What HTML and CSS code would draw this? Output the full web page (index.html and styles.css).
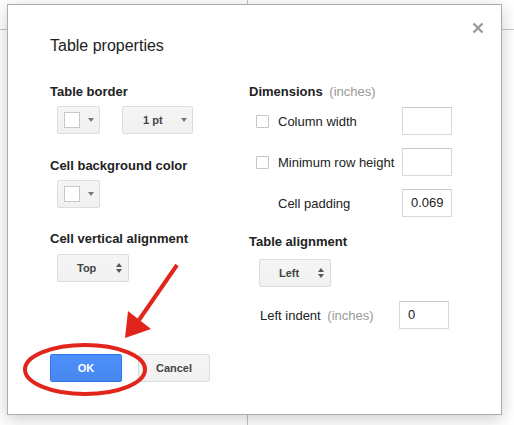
FILE: index.html
```html
<html>
<head>
    <meta charset="utf-8">
    <link rel="stylesheet" href="styles.css">
</head>
<body>

    <div class="dlg">
        <div class="dlgClose">
            <svg width="12" height="12" viewBox="0 0 12 12">
                <path d="M1.5 1.5 L10.5 10.5 M10.5 1.5 L1.5 10.5" stroke="#9a9a9a" stroke-width="2.4" fill="none"/>
            </svg>
        </div>

        <div class="dlgTitle">Table properties</div>

        <div class="dlgCols">
            <div class="colLeft">
                <div class="lbl">Table border</div>
                <div class="btnRow">
                    <div class="gbtn clrBtn"><span class="swatch"></span><span class="tri"></span></div>
                    <div class="gbtn ptBtn"><span class="ptTxt">1 pt</span><span class="tri"></span></div>
                </div>

                <div class="lbl lblGap">Cell background color</div>
                <div class="btnRow">
                    <div class="gbtn clrBtn"><span class="swatch"></span><span class="tri"></span></div>
                </div>

                <div class="lbl lblGap2">Cell vertical alignment</div>
                <div class="btnRow row3">
                    <div class="gbtn selBtn"><span class="selTxt">Top</span><span class="updn"><i class="up"></i><i class="dn"></i></span></div>
                </div>
            </div>

            <div class="colRight">
                <div class="lbl">Dimensions <span class="hint">(inches)</span></div>

                <div class="dimRow first">
                    <span class="chk"></span>
                    <span class="dimLbl">Column width</span>
                    <div class="inp"></div>
                </div>
                <div class="dimRow">
                    <span class="chk"></span>
                    <span class="dimLbl">Minimum row height</span>
                    <div class="inp"></div>
                </div>
                <div class="dimRow">
                    <span class="chkNone"></span>
                    <span class="dimLbl">Cell padding</span>
                    <div class="inp">0.069</div>
                </div>

                <div class="lbl lblAlign">Table alignment</div>
                <div class="btnRow rowAlign">
                    <div class="gbtn selBtn"><span class="selTxt">Left</span><span class="updn"><i class="up"></i><i class="dn"></i></span></div>
                </div>

                <div class="indentRow">
                    <span class="indLbl">Left indent <span class="hint">(inches)</span></span>
                    <div class="inp">0</div>
                </div>
            </div>
        </div>

        <div class="dlgBtns">
            <div class="okBtn">OK</div>
            <div class="gbtn cnlBtn">Cancel</div>
        </div>
    </div>

    <!-- red pointer drawn over the dialog -->
    <svg class="mark" width="514" height="425" viewBox="0 0 514 425">
        <ellipse cx="85" cy="369.5" rx="60" ry="24.5" stroke="#e1251b" stroke-width="4" fill="none"/>
        <line x1="177" y1="265" x2="139" y2="320" stroke="#e1251b" stroke-width="4"/>
        <polygon points="125,338 128,311 151,329" fill="#e1251b"/>
    </svg>

</body>
</html>
```

FILE: styles.css
```css
body {
    margin: 0;
    width: 514px;
    height: 425px;
    overflow: hidden;
    font-family: "Liberation Sans", Arial, sans-serif;
    color: #222;
    background:
        linear-gradient(#c4c4c4, #c4c4c4) 0 29px / 100% 1px no-repeat,
        linear-gradient(#c4c4c4, #c4c4c4) 247px 0 / 1px 100% no-repeat,
        #fff;
}

.dlg {
    position: relative;
    box-sizing: border-box;
    width: 495px;
    height: 411px;
    margin: 4px 0 0 7px;
    padding: 31px 0 0 42px;
    background: #fff;
    border: 1px solid #acacac;
    box-shadow: 0 4px 16px rgba(0, 0, 0, 0.2);
}

.dlgClose {
    position: absolute;
    top: 17px;
    right: 17px;
    width: 12px;
    height: 12px;
}
.dlgClose svg { display: block; }

.dlgTitle {
    font-size: 16px;
    line-height: 20px;
}

.dlgCols {
    display: flex;
    align-items: flex-start;
    margin-top: 28px;
}
.colLeft { width: 199px; }
.colRight { width: 210px; }

.lbl {
    font-size: 13px;
    line-height: 16px;
    font-weight: bold;
}
.lblGap { margin-top: 24px; }
.lblGap2 { margin-top: 23px; }
.lblAlign { margin-top: 17px; }
.hint {
    font-weight: normal;
    color: #999;
    margin-left: 3px;
}

/* grey google style buttons */
.btnRow {
    display: flex;
    gap: 22px;
    margin-top: 6px;
    padding-left: 7px;
}
.row3 { margin-top: 7px; }
.rowAlign { margin-top: 9px; padding-left: 10px; }

.gbtn {
    box-sizing: border-box;
    height: 28px;
    display: flex;
    align-items: center;
    border: 1px solid #dcdcdc;
    border-radius: 2px;
    background: linear-gradient(#f5f5f5, #f1f1f1);
    color: #444;
    font-size: 11px;
    font-weight: bold;
}
.clrBtn {
    width: 43px;
    padding-left: 6px;
}
.swatch {
    box-sizing: border-box;
    width: 16px;
    height: 16px;
    border: 1px solid #c8c8c8;
    background: #fff;
}
.tri {
    width: 0;
    height: 0;
    border-left: 3.5px solid transparent;
    border-right: 3.5px solid transparent;
    border-top: 4px solid #777;
    margin-left: 8px;
}
.ptBtn {
    width: 71px;
    padding-left: 20px;
}
.ptBtn .tri { margin-left: 18px; }

.selBtn {
    width: 72px;
    padding-left: 19px;
}
.selTxt { width: 39px; }
.rowAlign .selTxt { width: 39px; }
.updn {
    display: flex;
    flex-direction: column;
    gap: 2px;
}
.updn i {
    width: 0;
    height: 0;
    border-left: 3.5px solid transparent;
    border-right: 3.5px solid transparent;
}
.updn .up { border-bottom: 4px solid #555; }
.updn .dn { border-top: 4px solid #555; }

/* dimensions rows */
.dimRow {
    display: flex;
    align-items: center;
    margin-top: 13px;
    padding-left: 7px;
    font-size: 13px;
}
.dimRow.first { margin-top: 7px; }
.chk, .chkNone {
    box-sizing: border-box;
    width: 13px;
    height: 13px;
    margin-right: 9px;
    flex: none;
}
.chk {
    border: 1px solid #c6c6c6;
    border-radius: 1px;
}
.dimLbl { width: 124px; }

.inp {
    box-sizing: border-box;
    width: 50px;
    height: 28px;
    padding-left: 8px;
    border: 1px solid #d9d9d9;
    border-top-color: #c8c8c8;
    font-size: 13px;
    line-height: 26px;
}

.indentRow {
    display: flex;
    align-items: center;
    margin-top: 14px;
    padding-left: 11px;
    font-size: 13px;
}
.indLbl { width: 139px; }

.dlgBtns {
    display: flex;
    gap: 16px;
    margin-top: 25px;
}
.okBtn, .cnlBtn {
    box-sizing: border-box;
    width: 72px;
    height: 28px;
    justify-content: center;
    font-size: 11px;
    font-weight: bold;
    border-radius: 2px;
}
.okBtn {
    display: flex;
    align-items: center;
    color: #fff;
    border: 1px solid #3079ed;
    background: linear-gradient(#4d90fe, #4787ed);
}

.mark {
    position: absolute;
    left: 0;
    top: 0;
    pointer-events: none;
}
```
